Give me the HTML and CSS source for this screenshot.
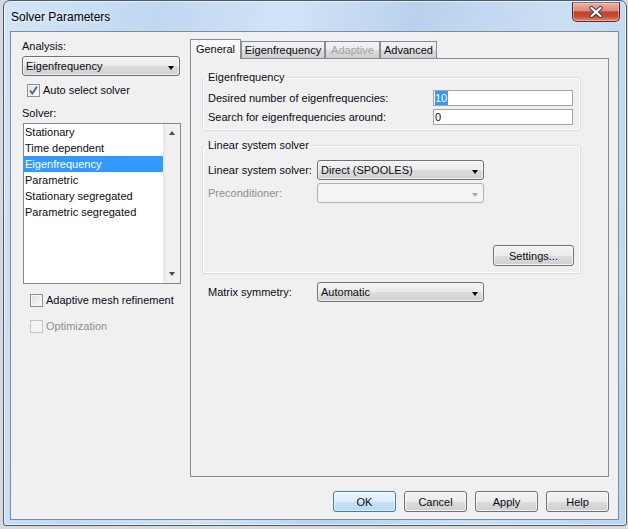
FILE: index.html
```html
<!DOCTYPE html>
<html>
<head>
<meta charset="utf-8">
<title>Solver Parameters</title>
<link rel="stylesheet" href="styles.css">
</head>
<body>
<div class="window">
  <div class="titlebar">
    <span class="title">Solver Parameters</span>
    <div class="close">
      <svg width="16" height="12" viewBox="0 0 16 12">
        <path d="M3.5 2 L12.5 10 M12.5 2 L3.5 10" stroke="#3a3f4a" stroke-width="4.2" stroke-linecap="round"/>
        <path d="M3.5 2 L12.5 10 M12.5 2 L3.5 10" stroke="#ffffff" stroke-width="2.2" stroke-linecap="round"/>
      </svg>
    </div>
  </div>
  <div class="client">
    <div class="main">
      <div class="leftcol">
        <div class="lbl">Analysis:</div>
        <div class="combo analysis"><span class="val">Eigenfrequency</span><i class="arrow"></i></div>
        <div class="check auto">
          <span class="box">
            <svg width="11" height="11" viewBox="0 0 11 11"><path d="M2 5.5 L4.3 8.5 L9 1.8" fill="none" stroke="#4a5d8c" stroke-width="1.8"/></svg>
          </span>
          <span>Auto select solver</span>
        </div>
        <div class="lbl solver-lbl">Solver:</div>
        <div class="listbox">
          <ul class="items">
            <li>Stationary</li>
            <li>Time dependent</li>
            <li class="selected">Eigenfrequency</li>
            <li>Parametric</li>
            <li>Stationary segregated</li>
            <li>Parametric segregated</li>
          </ul>
          <div class="scrollbar"><i class="up"></i><i class="down"></i></div>
        </div>
        <div class="check amr"><span class="box"></span><span>Adaptive mesh refinement</span></div>
        <div class="check opt disabled"><span class="box"></span><span>Optimization</span></div>
      </div>
      <div class="tabctl">
        <div class="tabs">
          <div class="tab active t1">General</div>
          <div class="tab t2">Eigenfrequency</div>
          <div class="tab disabled t3">Adaptive</div>
          <div class="tab t4">Advanced</div>
        </div>
        <div class="panel">
          <fieldset class="group g1">
            <legend>Eigenfrequency</legend>
            <div class="frow">
              <span>Desired number of eigenfrequencies:</span>
              <div class="input"><span class="sel">10</span></div>
            </div>
            <div class="frow">
              <span>Search for eigenfrequencies around:</span>
              <div class="input"><span>0</span></div>
            </div>
          </fieldset>
          <fieldset class="group g2">
            <legend>Linear system solver</legend>
            <div class="crow">
              <span>Linear system solver:</span>
              <div class="combo"><span class="val">Direct (SPOOLES)</span><i class="arrow"></i></div>
            </div>
            <div class="crow">
              <span class="dim">Preconditioner:</span>
              <div class="combo off"><span class="val"></span><i class="arrow"></i></div>
            </div>
            <div class="settings-row"><div class="btn settings">Settings...</div></div>
          </fieldset>
          <div class="crow mrow">
            <span>Matrix symmetry:</span>
            <div class="combo"><span class="val">Automatic</span><i class="arrow"></i></div>
          </div>
        </div>
      </div>
    </div>
    <div class="buttons">
      <div class="btn default">OK</div>
      <div class="btn">Cancel</div>
      <div class="btn">Apply</div>
      <div class="btn">Help</div>
    </div>
  </div>
</div>
</body>
</html>
```
FILE: styles.css
```css
* { box-sizing: border-box; }
html, body { margin: 0; padding: 0; }
body {
  width: 628px;
  height: 529px;
  overflow: hidden;
  background: #d6dadf;
  font-family: "Liberation Sans", Arial, sans-serif;
  font-size: 11px;
  color: #0a0a14;
}

.window {
  margin-left: 3px;
  width: 624px;
  height: 526px;
  border: 1px solid #465872;
  border-radius: 7px 7px 3px 3px;
  background: linear-gradient(100deg, #d3e5f7 0%, #bfd8f1 22%, #d2e4f7 40%, #b8d2ed 58%, #cbdff4 78%, #bcd5ef 100%);
  box-shadow: inset 0 0 0 1px rgba(255, 255, 255, 0.65);
  display: flex;
  flex-direction: column;
}

.titlebar {
  height: 30px;
  display: flex;
  justify-content: space-between;
  align-items: flex-start;
  padding-left: 7px;
}
.title {
  font-size: 12px;
  line-height: 28px;
  padding-top: 2px;
  color: #000;
  text-shadow: 0 0 6px rgba(255, 255, 255, 0.9);
}
.close {
  margin-top: 1px;
  margin-right: 6px;
  width: 48px;
  height: 20px;
  border: 1px solid #5b2a26;
  border-top-color: #9a6a66;
  border-radius: 0 0 5px 5px;
  background: linear-gradient(#eab0a3 0%, #dc8a78 42%, #c2402d 50%, #c84a35 75%, #e09070 100%);
  box-shadow: inset 0 0 0 1px rgba(255, 220, 210, 0.45);
  display: flex;
  align-items: center;
  justify-content: center;
}

.client {
  margin-left: 6px;
  width: 609px;
  height: 489px;
  border: 1px solid #7d8c9c;
  background: #f0f0f0;
  display: flex;
  flex-direction: column;
}
.main {
  display: flex;
  padding-top: 7px;
}

/* left column */
.leftcol {
  width: 179px;
  padding-left: 11px;
  display: flex;
  flex-direction: column;
}
.lbl { line-height: 14px; height: 14px; }
.solver-lbl { margin-top: 9px; }

.combo {
  height: 20px;
  border: 1px solid #707070;
  border-radius: 3px;
  background: linear-gradient(#f3f3f3 0%, #ebebeb 50%, #dddddd 51%, #d0d0d0 100%);
  box-shadow: inset 0 0 0 1px rgba(255, 255, 255, 0.6);
  display: flex;
  align-items: center;
  justify-content: space-between;
  padding-left: 3px;
  padding-right: 5px;
}
.combo .val { line-height: 14px; }
.arrow {
  width: 0;
  height: 0;
  border-left: 3.5px solid transparent;
  border-right: 3.5px solid transparent;
  border-top: 4px solid #000;
  margin-top: 3px;
}
.combo.off {
  border-color: #adb2b5;
  background: #f4f4f4;
  box-shadow: none;
}
.combo.off .arrow { border-top-color: #a9a9a9; }

.analysis { margin-top: 3px; width: 158px; }

.check {
  display: flex;
  align-items: center;
  height: 14px;
  line-height: 14px;
}
.check .box {
  width: 13px;
  height: 13px;
  border: 1px solid #8f8f8f;
  background: linear-gradient(135deg, #dcdcdc 0%, #f4f4f4 70%, #ffffff 100%);
  box-shadow: inset 0 0 0 1px #f4f4f4;
  margin-right: 3px;
  display: flex;
  align-items: center;
  justify-content: center;
}
.check.auto { margin-top: 7px; padding-left: 5px; }
.check.amr { margin-top: 9px; padding-left: 8px; }
.check.opt { margin-top: 12px; padding-left: 8px; }
.check.disabled { color: #8d8d8d; }
.check.disabled .box {
  border-color: #c4c4c4;
  background: #f4f4f4;
  box-shadow: none;
}

.listbox {
  margin-top: 3px;
  margin-left: 1px;
  width: 158px;
  height: 161px;
  border: 1px solid #828790;
  background: #ffffff;
  display: flex;
}
.items {
  list-style: none;
  margin: 0;
  padding: 0;
  width: 139px;
}
.items li {
  height: 16px;
  line-height: 16px;
  padding-left: 1px;
  white-space: nowrap;
}
.items li.selected {
  background: #3399ff;
  color: #ffffff;
}
.scrollbar {
  width: 17px;
  background: linear-gradient(90deg, #e6e6e6 0%, #f0f0f0 20%, #f0f0f0 100%);
  display: flex;
  flex-direction: column;
  justify-content: space-between;
  align-items: center;
  padding: 7px 0;
}
.scrollbar .up {
  width: 0; height: 0;
  border-left: 3.5px solid transparent;
  border-right: 3.5px solid transparent;
  border-bottom: 4px solid #4d4d4d;
}
.scrollbar .down {
  width: 0; height: 0;
  border-left: 3.5px solid transparent;
  border-right: 3.5px solid transparent;
  border-top: 4px solid #4d4d4d;
}

/* tab control */
.tabctl {
  width: 419px;
  display: flex;
  flex-direction: column;
}
.tabs {
  height: 19px;
  display: flex;
  align-items: flex-end;
}
.tab {
  height: 17px;
  border: 1px solid #898c95;
  border-bottom: none;
  background: linear-gradient(#f2f2f2 0%, #ebebeb 50%, #dddddd 51%, #cfcfcf 100%);
  text-align: center;
  line-height: 14px;
  padding-top: 1px;
  white-space: nowrap;
}
.tab.active {
  height: 20px;
  margin-bottom: -1px;
  padding-top: 2px;
  background: linear-gradient(#fcfcfc, #f0f0f0);
  position: relative;
  z-index: 1;
}
.tab.disabled { color: #a3a3a3; }
.t1 { width: 51px; }
.t2 { width: 84px; }
.t3 { width: 55px; }
.t4 { width: 57px; }

.panel {
  height: 419px;
  border: 1px solid #898c95;
  background: #f0f0f0;
  padding-left: 11px;
}

.group {
  margin: 0;
  min-width: 0;
  width: 379px;
  border: 1px solid #d5dfe5;
  border-radius: 3px;
  box-shadow: inset 0 0 0 1px #ffffff;
}
.group legend {
  margin-left: -3px;
  padding: 0 2px 0 3px;
  line-height: 14px;
  color: #0a0a14;
}
.g1 {
  margin-top: 11px;
  padding: 6px 6px 5px 5px;
}
.g2 {
  margin-top: 7px;
  padding: 8px 6px 7px 5px;
}

.frow {
  display: grid;
  grid-template-columns: 225px 140px;
  align-items: center;
  height: 16px;
}
.frow + .frow { margin-top: 3px; }
.input {
  height: 16px;
  border: 1px solid #a5a5a5;
  background: #ffffff;
  padding-left: 1px;
  line-height: 14px;
}
.input .sel {
  background: #3399ff;
  color: #ffffff;
  display: inline-block;
  padding-right: 1px;
}

.crow {
  display: grid;
  grid-template-columns: 109px 167px;
  align-items: center;
}
.crow + .crow { margin-top: 3px; }
.dim { color: #8d8d8d; }
.mrow {
  margin-top: 8px;
  margin-left: 6px;
}

.settings-row {
  display: flex;
  justify-content: flex-end;
  margin-top: 42px;
}

.btn {
  height: 21px;
  border: 1px solid #707070;
  border-radius: 3px;
  background: linear-gradient(#f3f3f3 0%, #ebebeb 50%, #dddddd 51%, #cfcfcf 100%);
  box-shadow: inset 0 0 0 1px rgba(255, 255, 255, 0.7);
  display: flex;
  align-items: center;
  justify-content: center;
  line-height: 14px;
  width: 63px;
}
.btn.settings { width: 81px; }
.btn.default {
  border-color: #3c7fb1;
  background: linear-gradient(#eaf5fc 0%, #dcedf9 50%, #c7e3f6 51%, #b9dbf3 100%);
  box-shadow: inset 0 0 0 1px rgba(255, 255, 255, 0.6);
}

.buttons {
  margin-top: 14px;
  display: flex;
  justify-content: flex-end;
  gap: 8px;
  padding-right: 9px;
}
```
